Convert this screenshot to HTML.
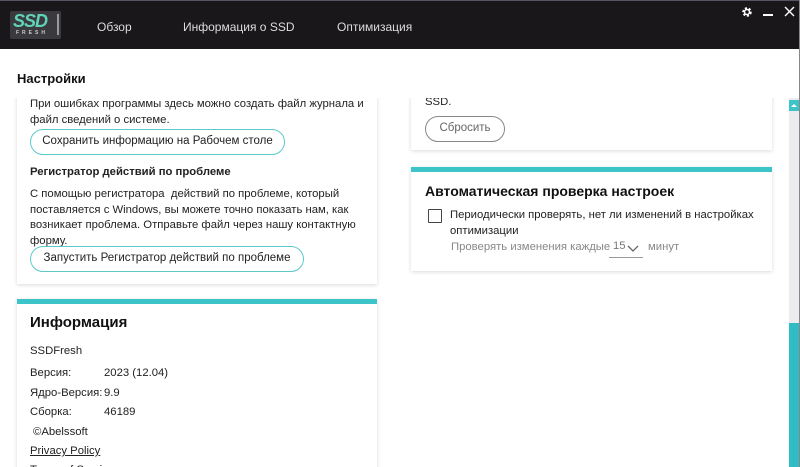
<!DOCTYPE html>
<html><head><meta charset="utf-8"><style>
*{margin:0;padding:0;box-sizing:border-box}
body{width:800px;height:467px;overflow:hidden;background:#fff;font-family:"Liberation Sans",sans-serif;color:#222;position:relative}
.hdr{position:absolute;left:0;top:0;width:800px;height:49px;background:#1a171b;border-top:1px solid #556}
.nav{position:absolute;top:19px;color:#ddd;font-size:12px}
.logo{position:absolute;left:10px;top:10px;width:51px;height:28px;background:#3a3a3e;border-radius:2px}
.abs{position:absolute}
.view{position:absolute;left:0;top:98px;width:789px;height:369px;overflow:hidden}
.card{position:absolute;background:#fff;box-shadow:0 1px 4px rgba(0,0,0,.15)}
.bar{position:absolute;height:5px;background:#3cc4c8}
.t{position:absolute;font-size:11.3px;line-height:15.5px;color:#222;white-space:nowrap}
.btn{position:absolute;height:26px;border:1.5px solid #5ec9cb;border-radius:13px;font-size:11.5px;line-height:23px;text-align:center;color:#222}
</style></head><body>
<div class="hdr">
 <div class="logo"><div class="abs" style="left:3px;top:0px;color:#5fd4b8;font-weight:bold;font-style:italic;font-size:18px;letter-spacing:-1px">SSD</div><div class="abs" style="left:6px;top:19px;color:#ccc;font-size:5px;font-weight:bold;letter-spacing:3px">FRESH</div><div class="abs" style="left:47px;top:3px;width:2px;height:21px;background:#999"></div></div>
 <div class="nav" style="left:97px">Обзор</div>
 <div class="nav" style="left:183px">Информация о SSD</div>
 <div class="nav" style="left:337px">Оптимизация</div>
 <svg class="abs" style="left:741px;top:5px" width="12" height="12" viewBox="0 0 12 12"><circle cx="6" cy="6" r="3.5" fill="none" stroke="#fff" stroke-width="2.5" stroke-dasharray="2 1.6"/><circle cx="6" cy="6" r="2.5" fill="none" stroke="#fff" stroke-width="1.5"/></svg>
 <div class="abs" style="left:763px;top:13px;width:10px;height:2px;background:#fff"></div>
 <svg class="abs" style="left:784px;top:5px" width="11" height="11" viewBox="0 0 11 11"><path d="M1 1L10 10M10 1L1 10" stroke="#fff" stroke-width="1.4"/></svg>
</div>
<div class="abs" style="left:17px;top:71px;font-size:13px;font-weight:bold;color:#111">Настройки</div>
<div class="view">
 <div class="card" style="left:17px;top:-20px;width:360px;height:206px"></div>
 <div class="t" style="left:30px;top:-1px">При ошибках программы здесь можно создать файл журнала и<br>файл сведений о системе.</div>
 <div class="btn" style="left:30px;top:31px;width:255px">Сохранить информацию на Рабочем столе</div>
 <div class="t" style="left:30px;top:67px;font-weight:bold">Регистратор действий по проблеме</div>
 <div class="t" style="left:30px;top:89px">С помощью регистратора&nbsp; действий по проблеме, который<br>поставляется с Windows, вы можете точно показать нам, как<br>возникает проблема. Отправьте файл через нашу контактную<br>форму.</div>
 <div class="btn" style="left:30px;top:148px;width:274px">Запустить Регистратор действий по проблеме</div>

 <div class="card" style="left:17px;top:201px;width:360px;height:200px"></div>
 <div class="bar" style="left:17px;top:201px;width:360px"></div>
 <div class="abs" style="left:30px;top:216px;font-size:15px;font-weight:bold;color:#111">Информация</div>
 <div class="t" style="left:30px;top:246px">SSDFresh</div>
 <div class="t" style="left:30px;top:268px">Версия:</div><div class="t" style="left:104px;top:268px">2023 (12.04)</div>
 <div class="t" style="left:30px;top:288px">Ядро-Версия:</div><div class="t" style="left:104px;top:288px">9.9</div>
 <div class="t" style="left:30px;top:307px">Сборка:</div><div class="t" style="left:104px;top:307px">46189</div>
 <div class="t" style="left:33px;top:327px">©Abelssoft</div>
 <div class="t" style="left:30px;top:346px;text-decoration:underline">Privacy Policy</div>
 <div class="t" style="left:30px;top:365px;text-decoration:underline">Terms of Service</div>

 <div class="card" style="left:411px;top:-20px;width:361px;height:72px"></div>
 <div class="t" style="left:425px;top:-3px">SSD.</div>
 <div class="btn" style="left:425px;top:18px;width:80px;border-color:#888;color:#666">Сбросить</div>

 <div class="card" style="left:411px;top:69px;width:361px;height:104px"></div>
 <div class="bar" style="left:411px;top:69px;width:361px"></div>
 <div class="abs" style="left:425px;top:85px;font-size:14px;font-weight:bold;color:#111">Автоматическая проверка настроек</div>
 <div class="abs" style="left:428px;top:111px;width:14px;height:14px;border:1.5px solid #444;border-radius:1px"></div>
 <div class="t" style="left:450px;top:110px">Периодически проверять, нет ли изменений в настройках<br>оптимизации</div>
 <div class="t" style="left:451px;top:142px;color:#888">Проверять изменения каждые</div>
 <div class="t" style="left:613px;top:141px;color:#777">15</div>
 <svg class="abs" style="left:627px;top:147px" width="12" height="8" viewBox="0 0 12 8"><path d="M1 1L6 6L11 1" stroke="#666" stroke-width="1.3" fill="none"/></svg>
 <div class="abs" style="left:609px;top:159px;width:34px;height:1px;background:#999"></div>
 <div class="t" style="left:648px;top:142px;color:#888">минут</div>
</div>
<div class="abs" style="left:789px;top:98px;width:11px;height:369px;background:#ebebf0"></div>
<div class="abs" style="left:789px;top:100px;width:10px;height:11px;background:#3cc4c8"></div>
<svg class="abs" style="left:791px;top:103px" width="6" height="5" viewBox="0 0 6 5"><path d="M0 4L3 1L6 4Z" fill="#fff"/></svg>
<div class="abs" style="left:789px;top:323px;width:10px;height:144px;background:#30bcc4"></div>
<div class="abs" style="left:799px;top:0;width:1px;height:467px;background:#888"></div>
</body></html>
